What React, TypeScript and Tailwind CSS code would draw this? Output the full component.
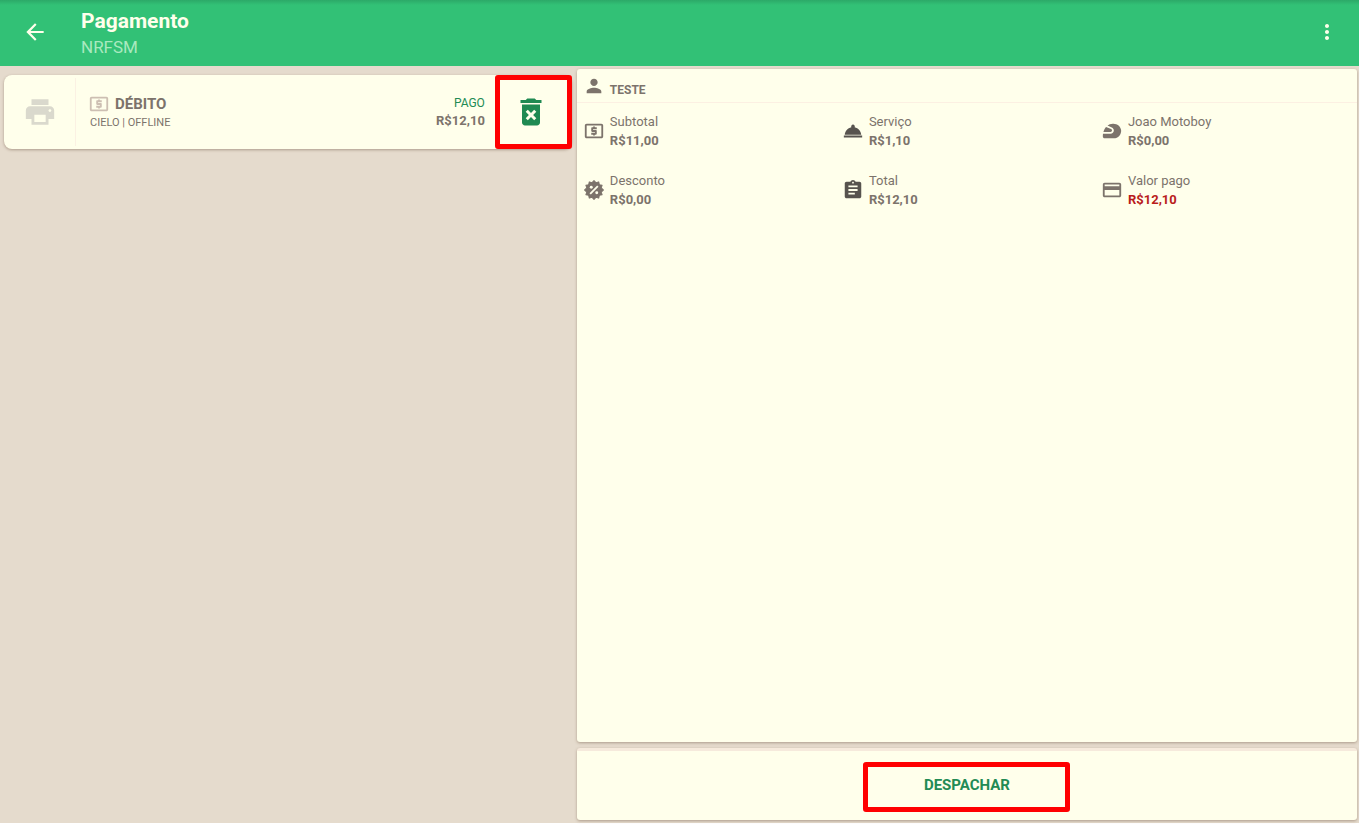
import type { ReactNode } from "react";
import {
  MdArrowBack,
  MdAssignment,
  MdDeleteForever,
  MdLocalAtm,
  MdMoreVert,
  MdOutlineCreditCard,
  MdPerson,
  MdPrint,
  MdRoomService,
  MdSportsMotorsports,
} from "react-icons/md";

const DiscountIcon = () => (
  <svg viewBox="0 0 24 24" className="size-[22px]" fill="currentColor" aria-hidden="true">
    <path
      d="M12 1.8 14.28 4.2 17.1 3.2 17.8 6.2 20.8 6.9 19.8 9.72 22.2 12 19.8 14.28 20.8 17.1 17.8 17.8 17.1 20.8 14.28 19.8 12 22.2 9.72 19.8 6.9 20.8 6.2 17.8 3.2 17.1 4.2 14.28 1.8 12 4.2 9.72 3.2 6.9 6.2 6.2 6.9 3.2 9.72 4.2Z"
      stroke="currentColor"
      strokeWidth="1.2"
      strokeLinejoin="round"
    />
    <path d="M7.8 16.2 16.2 7.8" stroke="#ffffeb" strokeWidth="2" />
    <circle cx="9" cy="9" r="1.6" fill="#ffffeb" />
    <circle cx="15" cy="15" r="1.6" fill="#ffffeb" />
  </svg>
);

type Summary = {
  label: string;
  value: string;
  icon: ReactNode;
  valueClass?: string;
};

const summary: Summary[] = [
  { label: "Subtotal", value: "R$11,00", icon: <MdLocalAtm className="size-[22px]" /> },
  {
    label: "Serviço",
    value: "R$1,10",
    icon: <MdRoomService className="size-[22px] text-[#57534e]" />,
  },
  {
    label: "Joao Motoboy",
    value: "R$0,00",
    icon: <MdSportsMotorsports className="size-[22px]" />,
  },
  { label: "Desconto", value: "R$0,00", icon: <DiscountIcon /> },
  {
    label: "Total",
    value: "R$12,10",
    icon: <MdAssignment className="size-[22px] text-[#57534e]" />,
  },
  {
    label: "Valor pago",
    value: "R$12,10",
    icon: <MdOutlineCreditCard className="size-[22px]" />,
    valueClass: "text-[#b91c1c]",
  },
];

const Header = () => (
  <header className="flex h-[66px] shrink-0 items-center bg-[#32c176] bg-linear-to-b from-[#2ca968] to-[#32c176] to-[5px] pr-5 pb-[2px] pl-[22px] text-[#ffffeb]">
    <button aria-label="Voltar">
      <MdArrowBack className="size-[26px]" />
    </button>
    <div className="ml-[33px] flex-1 pt-1">
      <h1 className="text-[21px] leading-[26px] font-bold">Pagamento</h1>
      <p className="text-[17px] leading-[26px] text-[#a9e9bf]">NRFSM</p>
    </div>
    <button aria-label="Mais opções">
      <MdMoreVert className="size-6" />
    </button>
  </header>
);

const PaymentCard = () => (
  <div className="flex h-[74px] rounded-lg bg-[#ffffeb] shadow-[0_1px_3px_rgba(90,60,40,0.4)]">
    <button
      aria-label="Imprimir"
      className="my-[3px] flex w-[72px] items-center justify-center border-r border-[#fbf1e3] text-[#dad9cd]"
    >
      <MdPrint className="size-[34px]" />
    </button>
    <div className="flex flex-1 flex-col justify-center pl-3">
      <div className="flex items-center gap-[5px]">
        <MdLocalAtm className="size-[22px] text-[#cdbfb2]" />
        <span className="text-[15px] leading-5 font-bold">DÉBITO</span>
      </div>
      <span className="pl-[2px] text-[11px] leading-4">CIELO | OFFLINE</span>
    </div>
    <div className="flex flex-col items-end justify-center pr-[10px]">
      <span className="text-[12px] leading-[18px] text-[#228b55]">PAGO</span>
      <span className="text-[13px] leading-[18px] font-bold">R$12,10</span>
    </div>
    <button
      aria-label="Excluir pagamento"
      className="flex w-[77px] items-center justify-center rounded-[3px] border-5 border-[#ff0000] pr-[5px] text-[#1f8a52]"
    >
      <MdDeleteForever className="size-9" />
    </button>
  </div>
);

const SummaryItem = ({ label, value, icon, valueClass }: Summary) => (
  <div className="flex items-center gap-[5px] pl-[6px]">
    {icon}
    <dl className="text-[13px] leading-[19px]">
      <dt>{label}</dt>
      <dd className={`font-bold ${valueClass ?? ""}`}>{value}</dd>
    </dl>
  </div>
);

export default function App() {
  return (
    <div className="h-screen bg-white pr-[3px] pb-[2px] font-['Roboto',sans-serif] text-[#7c736b]">
      <div className="flex h-full flex-col bg-[#e5dbcd]">
        <Header />
        <main className="flex min-h-0 flex-1">
          <section className="w-[42.3%] shrink-0 pt-[9px] pr-[3px] pl-1">
            <PaymentCard />
          </section>
          <section className="flex min-w-0 flex-1 flex-col gap-[6px] pt-[3px] pr-[2px] pb-[3px] pl-[2px]">
            <div className="flex-1 rounded-[3px] bg-[#ffffeb] shadow-[0_1px_3px_rgba(90,60,40,0.4)]">
              <div className="flex h-[34px] items-center gap-[5px] border-b border-[#fcf0e2] px-[6px]">
                <MdPerson className="size-[22px]" />
                <h2 className="pt-2 text-[12px] leading-4 font-bold">TESTE</h2>
              </div>
              <div className="grid grid-cols-3 gap-y-[21px] pt-[9px] pr-[3px]">
                {summary.map((item) => (
                  <SummaryItem key={item.label} {...item} />
                ))}
              </div>
            </div>
            <div className="flex h-[72px] justify-center rounded-[3px] border-t-3 border-[#f6eadc] bg-[#ffffeb] pt-[11px] shadow-[0_1px_3px_rgba(90,60,40,0.4)]">
              <button className="h-[50px] w-[207px] rounded-[3px] border-5 border-[#ff0000] pb-1 text-[15px] font-bold text-[#228b55]">
                DESPACHAR
              </button>
            </div>
          </section>
        </main>
      </div>
    </div>
  );
}
